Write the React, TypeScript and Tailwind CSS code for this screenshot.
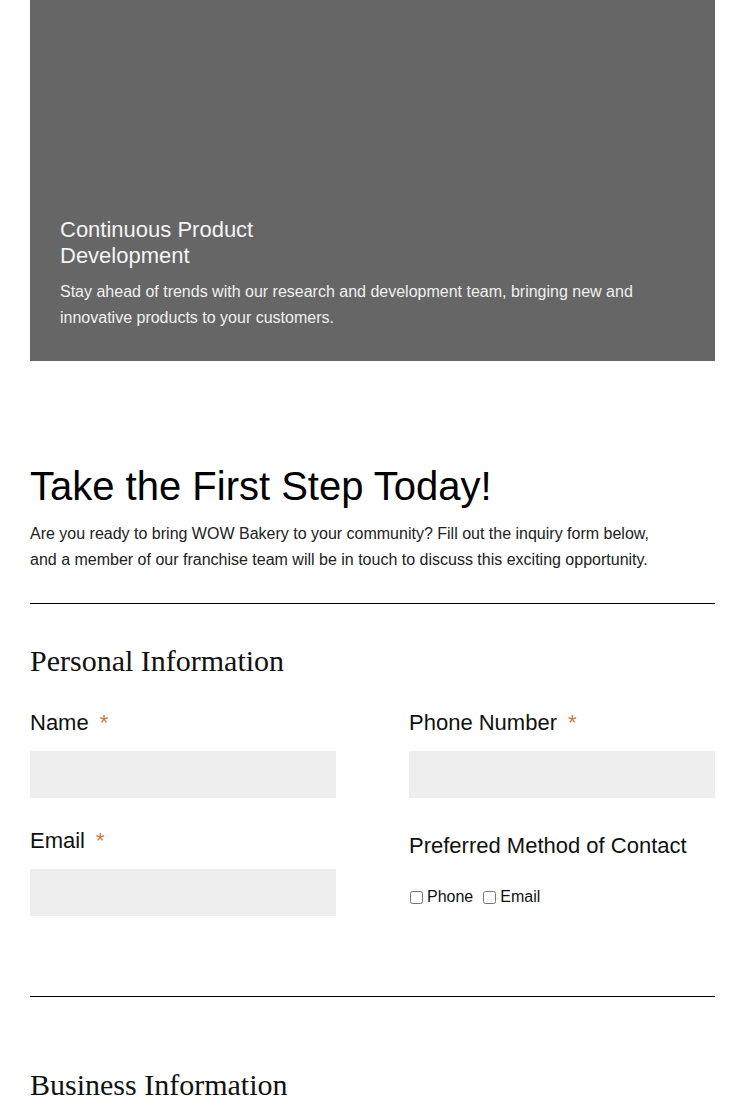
import React from "react";

const sans = { fontFamily: '"Liberation Sans", Arial, sans-serif' };

function Label({ text, required }: { text: string; required?: boolean }) {
  return (
    <label className="flex items-center text-[22px] leading-[26px] text-[#111]">
      <span>{text}</span>
      {required && <span className="ml-[11px] text-[#d2773a]">*</span>}
    </label>
  );
}

export default function App() {
  return (
    <div className="bg-white px-[30px]" style={sans}>
      <div className="flex h-[361px] flex-col justify-end bg-[#666666] px-[30px] pb-[30px] text-white">
        <h3 className="mb-[10px] text-[22px] leading-[26px] text-[#f4f4f4]">
          Continuous Product
          <br />
          Development
        </h3>
        <p className="text-[16px] leading-[26px] text-[#f0f0f0]">
          Stay ahead of trends with our research and development team, bringing new and innovative products to your customers.
        </p>
      </div>

      <h2 className="mt-[101px] text-[40px] leading-[48px] text-black">Take the First Step Today!</h2>
      <p className="mt-[11px] text-[16px] leading-[26px] text-[#222]">
        Are you ready to bring WOW Bakery to your community? Fill out the inquiry form below,
        <br />
        and a member of our franchise team will be in touch to discuss this exciting opportunity.
      </p>

      <hr className="mt-[30px] border-0 border-t border-black" />

      <h3
        className="mt-[39px] text-[30px] leading-[36px] text-[#111]"
        style={{ fontFamily: '"Liberation Serif", "Times New Roman", serif' }}
      >
        Personal Information
      </h3>

      <div className="mt-[31px] grid grid-cols-2 gap-x-[73px]">
        <div className="flex flex-col">
          <Label text="Name" required />
          <input className="mt-[15px] h-[47px] w-full bg-[#eeeeee] outline-none" />
          <div className="mt-[30px]">
            <Label text="Email" required />
          </div>
          <input className="mt-[15px] h-[47px] w-full bg-[#eeeeee] outline-none" />
        </div>
        <div className="flex flex-col">
          <Label text="Phone Number" required />
          <input className="mt-[15px] h-[47px] w-full bg-[#eeeeee] outline-none" />
          <div className="mt-[35px]">
            <Label text="Preferred Method of Contact" />
          </div>
          <div className="mt-[28px] flex items-center text-[16px] leading-[20px] text-[#111]">
            <input type="checkbox" className="ml-[1px] h-[13px] w-[13px]" />
            <span className="ml-[4px]">Phone</span>
            <input type="checkbox" className="ml-[10px] h-[13px] w-[13px]" />
            <span className="ml-[4px]">Email</span>
          </div>
        </div>
      </div>

      <hr className="mt-[80px] border-0 border-t border-black" />

      <h3
        className="mt-[70px] pb-[20px] text-[30px] leading-[36px] text-[#111]"
        style={{ fontFamily: '"Liberation Serif", "Times New Roman", serif' }}
      >
        Business Information
      </h3>
    </div>
  );
}
